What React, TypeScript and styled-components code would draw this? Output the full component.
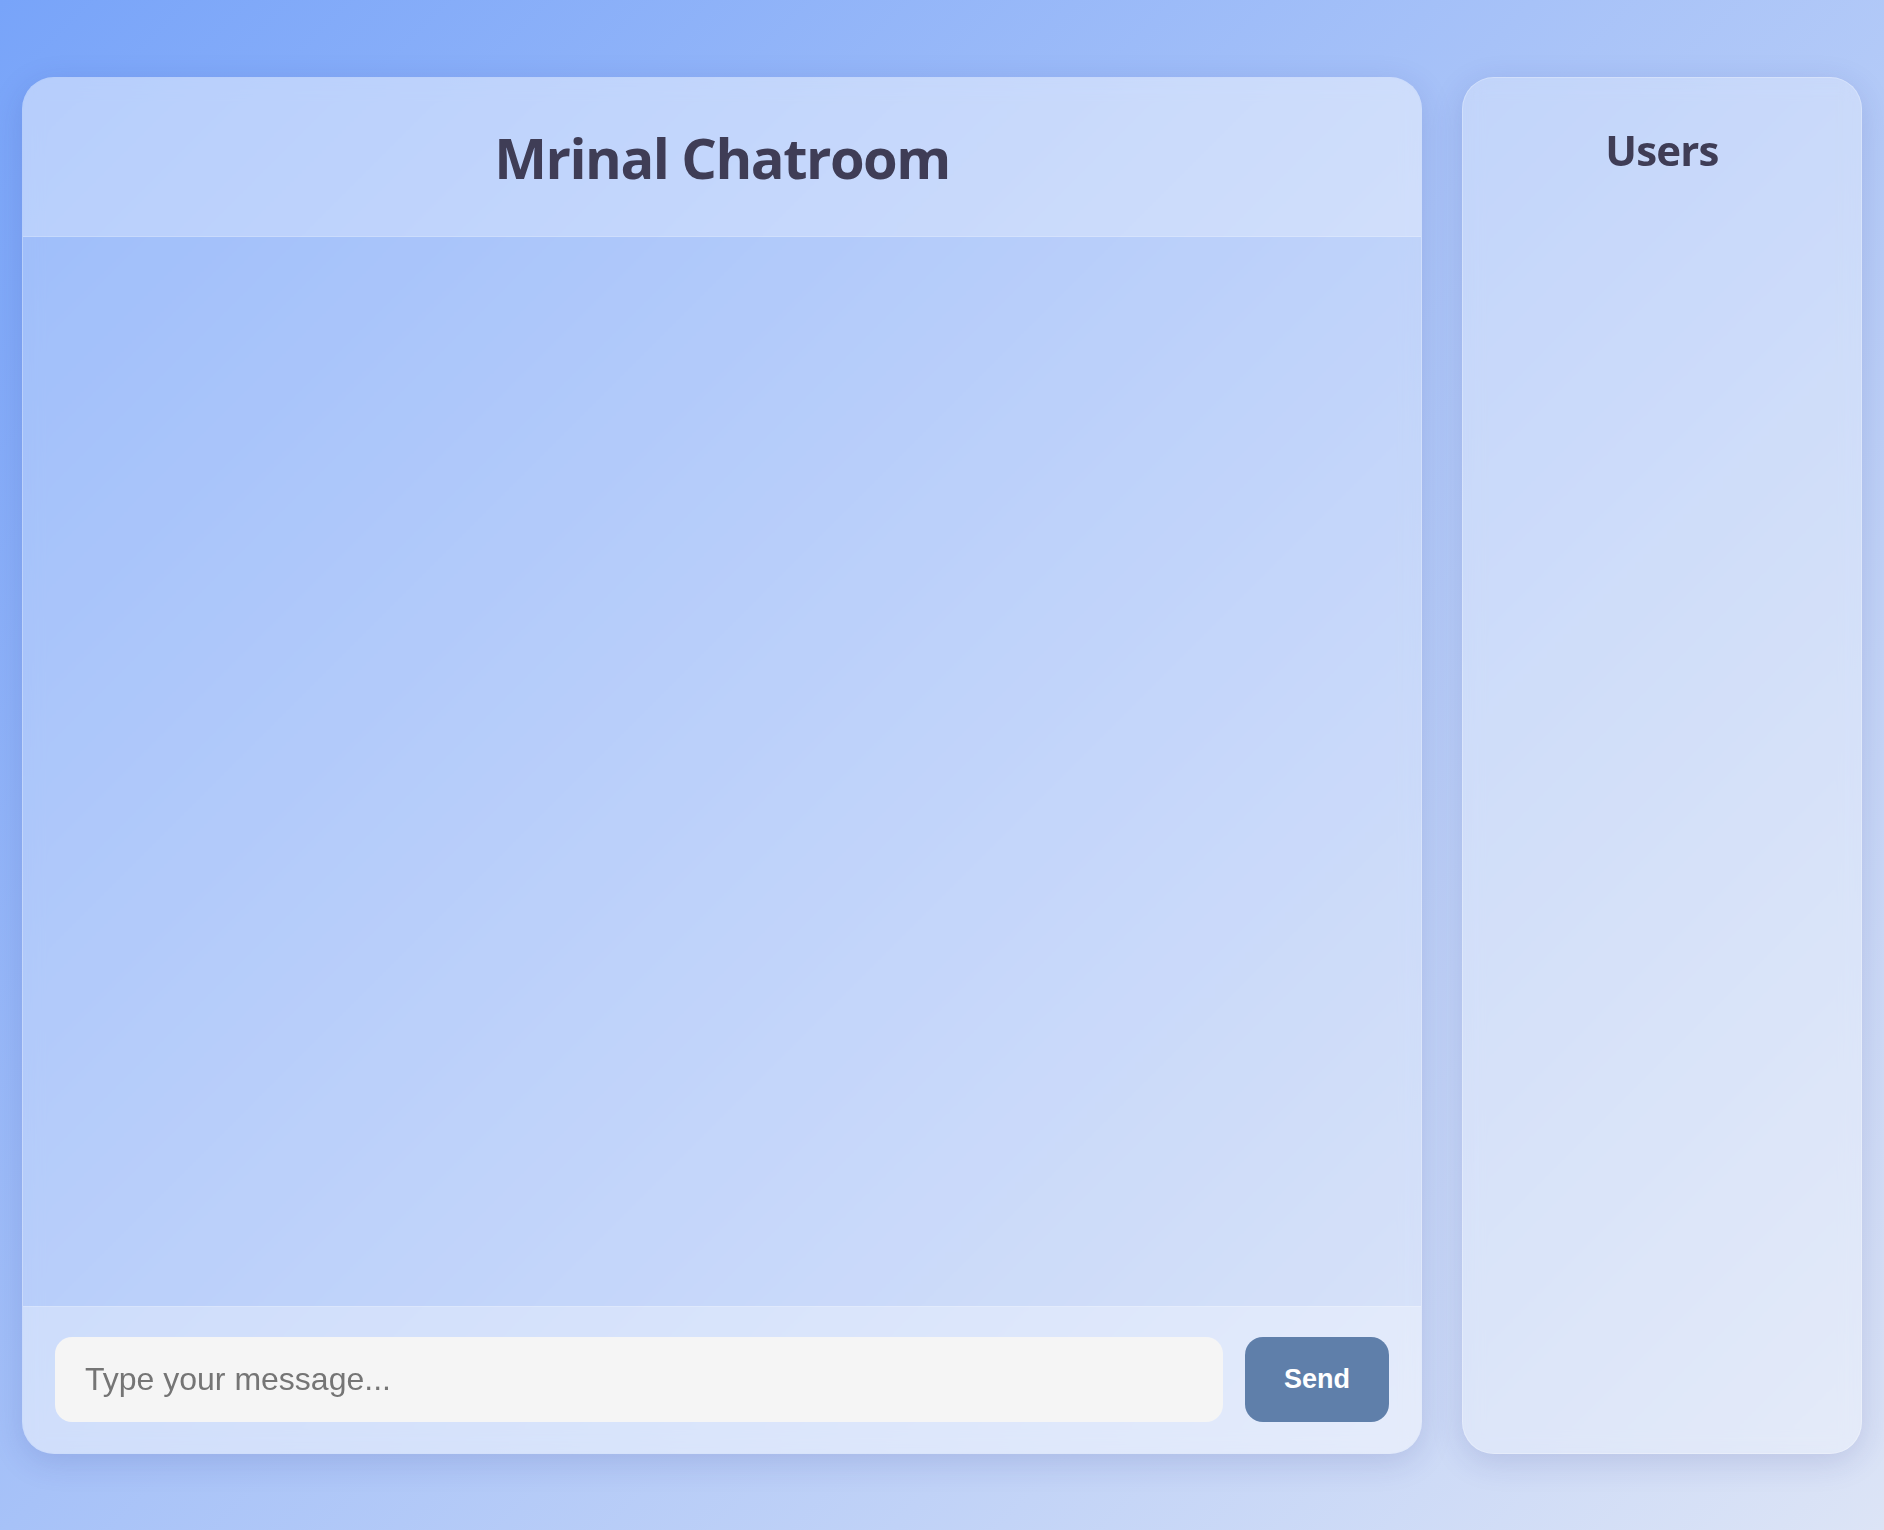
import React from "react";
import styled, { createGlobalStyle } from "styled-components";

const GlobalStyle = createGlobalStyle`
	html,
	body {
		margin: 0;
		padding: 0;
		height: 100%;
	}
	body {
		background: linear-gradient(135deg, #78a4f9 0%, #a7c2f8 45%, #dce4f6 100%);
		font-family: "Liberation Sans", Arial, sans-serif;
	}
	* {
		box-sizing: border-box;
	}
`;

const Page = styled.div`
	height: 100vh;
	display: flex;
	align-items: center;
	gap: 40px;
	padding: 0 22px;
`;

const Glass = styled.div`
	height: 90vh;
	border-radius: 32px;
	background: rgba(255, 255, 255, 0.25);
	border: 1px solid rgba(255, 255, 255, 0.25);
	box-shadow: 0 8px 32px rgba(31, 38, 135, 0.15);
	backdrop-filter: blur(10px);
	overflow: hidden;
`;

const ChatPanel = styled(Glass)`
	flex: 1;
	display: flex;
	flex-direction: column;
`;

const Header = styled.div`
	height: 159px;
	display: flex;
	align-items: center;
	justify-content: center;
	background: rgba(255, 255, 255, 0.27);
	border-bottom: 1px solid rgba(255, 255, 255, 0.2);
`;

const Title = styled.h1`
	margin: 0;
	font-family: "Open Sans", sans-serif;
	font-size: ${(props) => props.size}px;
	font-weight: 700;
	color: #3f3d56;
	letter-spacing: ${(props) => props.spacing}px;
`;

const Messages = styled.div`
	flex: 1;
`;

const Footer = styled.div`
	display: flex;
	gap: 22px;
	padding: 30px 32px 31px;
	background: rgba(255, 255, 255, 0.3);
	border-top: 1px solid rgba(255, 255, 255, 0.2);
`;

const Input = styled.input`
	flex: 1;
	height: 85px;
	padding: 0 30px;
	border: none;
	outline: none;
	border-radius: 17px;
	background: #f5f5f5;
	font-family: "Liberation Sans", Arial, sans-serif;
	font-size: 32px;
	color: #333;
	&::placeholder {
		color: #757575;
	}
`;

const SendButton = styled.button`
	width: 144px;
	height: 85px;
	border: none;
	border-radius: 18px;
	background: #5f7faa;
	color: #fff;
	font-family: "Liberation Sans", Arial, sans-serif;
	font-size: 27px;
	font-weight: 700;
	cursor: pointer;
`;

const UsersPanel = styled(Glass)`
	width: 400px;
	background: rgba(255, 255, 255, 0.3);
	display: flex;
	flex-direction: column;
	align-items: center;
	padding-top: 43px;
`;

export default () => {
	return (
		<>
			<GlobalStyle />
			<Page>
				<ChatPanel>
					<Header>
						<Title size={56} spacing={-1.5}>
							Mrinal Chatroom
						</Title>
					</Header>
					<Messages />
					<Footer>
						<Input placeholder="Type your message..." />
						<SendButton>Send</SendButton>
					</Footer>
				</ChatPanel>
				<UsersPanel>
					<Title size={42} spacing={-0.8}>
						Users
					</Title>
				</UsersPanel>
			</Page>
		</>
	);
};
